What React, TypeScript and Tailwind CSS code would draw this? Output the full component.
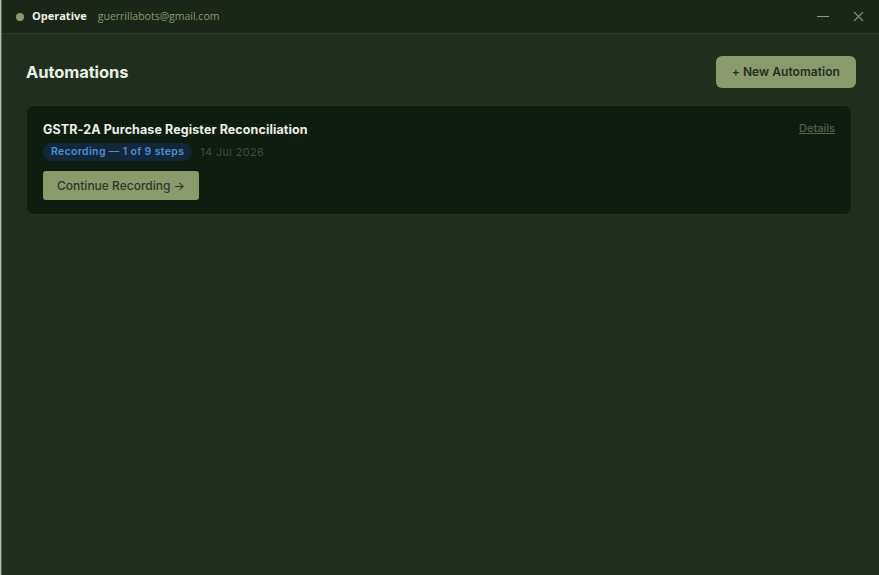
import React from "react";

export default function App() {
  return (
    <div className="w-[879px] h-[575px] flex bg-[#d0d0d0] overflow-hidden" style={{ fontFamily: "Inter, 'Noto Sans', sans-serif" }}>
      <div className="w-[1px] bg-[#b8bcc0]" />
      <div className="flex-1 flex flex-col border-l border-[#56684a] bg-[#1f2e1d]">
        <div className="h-[34px] flex items-center bg-[#1a2718] border-b border-[#2c3d29] pl-[14px] pr-[14px]">
          <span className="w-[8px] h-[8px] rounded-full bg-[#8a9a6e]" />
          <span className="ml-[8px] text-[11px] font-bold text-[#f0f0ea]" style={{ fontFamily: "'Open Sans', sans-serif" }}>Operative</span>
          <span className="ml-[11px] text-[10.5px] text-[#8a9a6e]" style={{ fontFamily: "'Open Sans', sans-serif" }}>guerrillabots@gmail.com</span>
          <div className="flex-1" />
          <span className="w-[12px] h-[1px] bg-[#8aa070] mr-[24px]" />
          <svg width="11" height="11" viewBox="0 0 11 11" className="mr-[1px]">
            <path d="M1 1 L10 10 M10 1 L1 10" stroke="#7a8f66" strokeWidth="1.2" />
          </svg>
        </div>
        <div className="flex-1 px-[24px] pt-[22px]">
          <div className="flex items-center justify-between">
            <h1 className="text-[16.5px] font-bold text-[#eef0e8] tracking-[-0.1px]">Automations</h1>
            <button className="h-[32px] px-[16px] rounded-[6px] bg-[#8a9a6a] text-[12px] font-semibold text-[#1f3024] tracking-[0.05px] mr-[-1px]">+ New Automation</button>
          </div>
          <div className="mt-[17px] w-[826px] rounded-[8px] border border-[#22331f] bg-[#0f1d11] px-[16px] pt-[16px] pb-[14px]">
            <div className="flex items-start justify-between">
              <div className="text-[12.5px] font-bold text-[#eceee6] leading-[16px] tracking-[0.1px]">GSTR-2A Purchase Register Reconciliation</div>
              <span className="text-[11px] font-medium text-[#526448] underline mt-[-2px]">Details</span>
            </div>
            <div className="flex items-center mt-[5px]">
              <span className="h-[18px] flex items-center px-[8px] rounded-full bg-[#13273a] text-[10.5px] font-semibold text-[#4a8fd6] tracking-[0.35px]">Recording — 1 of 9 steps</span>
              <span className="ml-[8px] text-[11px] text-[#3e4f3a] tracking-[0.3px]">14 Jul 2026</span>
            </div>
            <button className="mt-[10px] h-[29px] px-[14px] rounded-[3px] bg-[#8a9a6a] text-[12px] font-medium text-[#2a3a2a]">Continue Recording →</button>
          </div>
        </div>
      </div>
    </div>
  );
}
